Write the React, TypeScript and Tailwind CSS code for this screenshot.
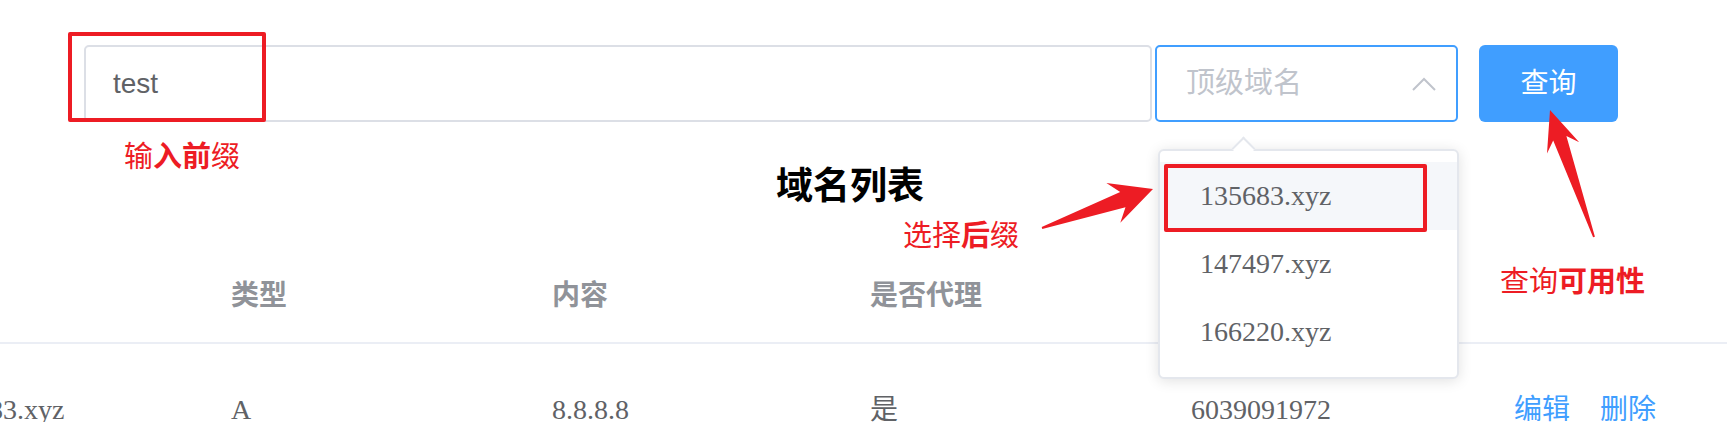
const sans = "font-['Liberation_Sans','Noto_Sans_CJK_SC',sans-serif]";
const serif = "font-['Liberation_Serif','Noto_Sans_CJK_SC',serif]";

// polygon for the red annotation arrows (snipaste style)
function arrowPoints(x1: number, y1: number, x2: number, y2: number, head: number, half: number, neck: number) {
  const dx = x2 - x1;
  const dy = y2 - y1;
  const len = Math.hypot(dx, dy);
  const ux = dx / len;
  const uy = dy / len;
  const nx = -uy;
  const ny = ux;
  const p = (a: number, b: number) => `${(x2 + ux * a + nx * b).toFixed(1)},${(y2 + uy * a + ny * b).toFixed(1)}`;
  return [
    p(-len, -1),
    p(-head + 10, -neck),
    p(-head, -half),
    p(0, 0),
    p(-head, half),
    p(-head + 10, neck),
    p(-len, 1),
  ].join(' ');
}

const rows = [
  { name: '135683.xyz', type: 'A', content: '8.8.8.8', proxy: '是', id: '6039091972' },
];

export default function App() {
  return (
    <div className={`relative h-[422px] w-full overflow-hidden bg-white ${sans}`}>
      {/* 搜索栏 */}
      <div className="flex pl-[84px] pt-[45px]">
        <div className="flex h-[77px] w-[1068px] items-center rounded-[5px] border-2 border-[#dcdfe6] pl-[27px] text-[28px] text-[#606266]">
          test
        </div>
        <div className="ml-[3px] flex h-[77px] w-[303px] items-center justify-between rounded-[5px] border-2 border-[#409eff] pl-[29px] pr-[20px] text-[29px] text-[#c0c4cc]">
          <span>顶级域名</span>
          <svg width="24" height="14" viewBox="0 0 24 14" fill="none" stroke="#c0c4cc" strokeWidth="2">
            <polyline points="1,13 12,2 23,13" />
          </svg>
        </div>
        <button className="ml-[21px] h-[77px] w-[139px] rounded-[6px] bg-[#409eff] text-[28px] text-white">
          查询
        </button>
      </div>

      <h2 className="mt-[46px] pr-[27px] text-center text-[37px] font-bold leading-none text-black">域名列表</h2>

      {/* 表格 */}
      <div className="mt-[45px] overflow-hidden">
        <div className="-ml-[87px] w-[calc(100%+87px)]">
          <div className="grid h-[94px] grid-cols-[298px_321px_318px_321px_323px_1fr] items-center border-b-2 border-[#ebeef5] text-[28px] font-bold text-[#909399]">
            <div className="pl-[20px]"></div>
            <div className="pl-[20px]">类型</div>
            <div className="pl-[20px]">内容</div>
            <div className="pl-[20px]">是否代理</div>
            <div className="pl-[20px]">ID</div>
            <div className="pl-[20px]"></div>
          </div>
          {rows.map((r) => (
            <div
              key={r.name}
              className={`grid h-[134px] grid-cols-[298px_321px_318px_321px_323px_1fr] items-center border-b-2 border-[#ebeef5] text-[28px] text-[#606266] ${serif}`}
            >
              <div className="pl-[20px]">{r.name}</div>
              <div className="pl-[20px]">{r.type}</div>
              <div className="pl-[20px]">{r.content}</div>
              <div className="pl-[20px]">{r.proxy}</div>
              <div className="pl-[20px]">{r.id}</div>
              <div className={`flex gap-[30px] pl-[20px] text-[#409eff] ${sans}`}>
                <span>编辑</span>
                <span>删除</span>
              </div>
            </div>
          ))}
        </div>
      </div>

      {/* 下拉框 */}
      <div className="absolute left-[1158px] top-[149px] w-[301px] rounded-[6px] border-2 border-[#e4e7ed] bg-white py-[11px] shadow-[0_2px_14px_0_rgba(0,0,0,0.12)]">
        <div className="absolute left-[75px] top-[-11px] h-[17px] w-[17px] rotate-45 border-l-2 border-t-2 border-[#e4e7ed] bg-white"></div>
        <ul className={`relative text-[28px] text-[#606266] ${serif}`}>
          {['135683.xyz', '147497.xyz', '166220.xyz'].map((d, i) => (
            <li key={d} className={`flex h-[68px] items-center pl-[40px] ${i === 0 ? 'bg-[#f5f7fa]' : ''}`}>
              {d}
            </li>
          ))}
        </ul>
        <div className="absolute left-[4px] top-[13px] h-[68px] w-[263px] rounded-[2px] border-4 border-[#ed1c24]"></div>
      </div>

      {/* 标注 */}
      <div className="absolute left-[68px] top-[32px] h-[90px] w-[198px] rounded-[2px] border-4 border-[#ed1c24]"></div>
      <div className="absolute left-[124px] top-[143px] text-[29px] leading-none text-[#ed1c24]">
        输<b>入前</b>缀
      </div>
      <div className="absolute left-[903px] top-[222px] text-[29px] leading-none text-[#ed1c24]">
        选择<b>后</b>缀
      </div>
      <div className="absolute left-[1500px] top-[268px] text-[29px] leading-none text-[#ed1c24]">
        查询<b>可用性</b>
      </div>
      <svg className="pointer-events-none absolute left-0 top-0" width="1727" height="422">
        <polygon points={arrowPoints(1042, 228, 1153, 189, 42, 21, 8)} fill="#ed1c24" />
        <polygon points={arrowPoints(1594, 237, 1550, 110, 40, 17, 7)} fill="#ed1c24" />
      </svg>
    </div>
  );
}
